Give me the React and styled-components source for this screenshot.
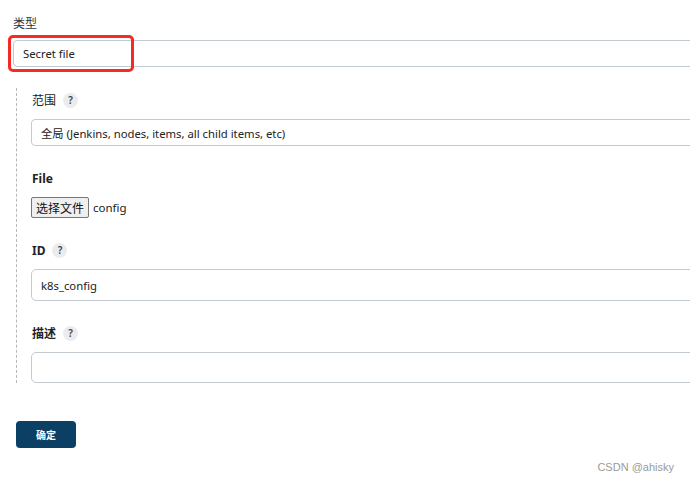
import styled, { createGlobalStyle } from 'styled-components';

const GlobalStyle = createGlobalStyle`
  body {
    margin: 0;
    background: #fff;
    overflow: hidden;
    font-family: "Noto Sans", "Noto Sans CJK SC", sans-serif;
    color: #333;
  }
`;

const Page = styled.div`
  width: 690px;
  height: 484px;
  padding: 16px 0 0 13px;
  box-sizing: border-box;
  display: flex;
  flex-direction: column;
  overflow: hidden;
`;

const TopLabel = styled.div`
  font-size: 12px;
  line-height: 16px;
  color: #333;
`;

const SelectWrap = styled.div`
  position: relative;
  margin-top: 8px;
`;

const Select = styled.div`
  box-sizing: border-box;
  width: 720px;
  height: ${(p) => p.$height || 27}px;
  border: 1px solid #c4cbd0;
  border-radius: 4px;
  padding-left: 9px;
  display: flex;
  align-items: center;
  font-size: 11.3px;
  color: #222;
  background: #fff;
`;

const Highlight = styled.div`
  position: absolute;
  left: -5px;
  top: -5px;
  width: 126px;
  height: 37px;
  box-sizing: border-box;
  border: 3px solid #f52a22;
  border-radius: 5px;
  pointer-events: none;
`;

const Nested = styled.div`
  margin: 21px 0 0 3px;
  border-left: 1px dashed #b7b7b7;
  padding: 2px 0 0 14px;
  display: flex;
  flex-direction: column;
  gap: 22px;
`;

const Field = styled.div`
  display: flex;
  flex-direction: column;
  gap: 9px;
`;

const LabelRow = styled.div`
  display: flex;
  align-items: center;
  gap: 7px;
  height: 20px;
  padding-left: 1px;
  font-size: 12px;
  font-weight: ${(p) => (p.$bold ? 700 : 400)};
  color: #222;
`;

const Help = styled.span`
  width: 15px;
  height: 15px;
  border-radius: 50%;
  background: #eaecee;
  color: #444;
  font-size: 10px;
  font-weight: 600;
  display: inline-flex;
  align-items: center;
  justify-content: center;
`;

const Input = styled(Select)`
  height: ${(p) => p.$height || 32}px;
  border-radius: 5px;
`;

const FileRow = styled.div`
  display: flex;
  align-items: center;
  gap: 4px;
  font-size: 11.5px;
  color: #222;
`;

const FileButton = styled.button`
  height: 21px;
  padding: 0 4px;
  border: 1px solid #767676;
  border-radius: 2px;
  background: #efefef;
  font-family: "Noto Sans CJK SC", sans-serif;
  font-size: 12px;
  color: #111;
`;

const Submit = styled.button`
  align-self: flex-start;
  margin: 38px 0 0 3px;
  width: 60px;
  height: 27px;
  border: none;
  border-radius: 4px;
  background: #0b3f63;
  color: #fff;
  font-family: "Noto Sans CJK SC", sans-serif;
  font-size: 10px;
  font-weight: 700;
`;

const Footer = styled.div`
  display: flex;
  justify-content: flex-end;
  padding: 13px 16px 0 0;
  font-family: "Liberation Sans", Arial, sans-serif;
  font-size: 11px;
  color: #9a9a9a;
`;

export default function App() {
  return (
    <>
      <GlobalStyle />
      <Page>
        <TopLabel>类型</TopLabel>
        <SelectWrap>
          <Select>Secret file</Select>
          <Highlight />
        </SelectWrap>
        <Nested>
          <Field>
            <LabelRow>
              范围 <Help>?</Help>
            </LabelRow>
            <Select>全局 (Jenkins, nodes, items, all child items, etc)</Select>
          </Field>
          <Field>
            <LabelRow $bold>File</LabelRow>
            <FileRow>
              <FileButton type="button">选择文件</FileButton>
              config
            </FileRow>
          </Field>
          <Field>
            <LabelRow $bold>
              ID <Help>?</Help>
            </LabelRow>
            <Input>k8s_config</Input>
          </Field>
          <Field>
            <LabelRow $bold>
              描述 <Help>?</Help>
            </LabelRow>
            <Input $height={31} />
          </Field>
        </Nested>
        <Submit type="button">确定</Submit>
        <Footer>CSDN @ahisky</Footer>
      </Page>
    </>
  );
}
